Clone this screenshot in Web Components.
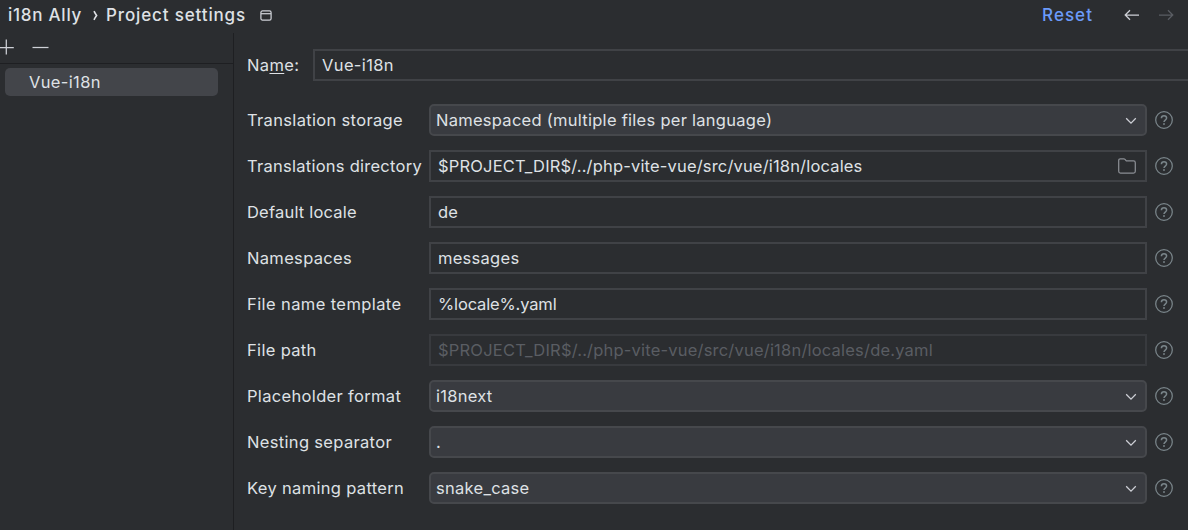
<!DOCTYPE html>
<html lang="en">
<head>
<meta charset="utf-8">
<title>i18n Ally – Project settings</title>
<style>
html,body{margin:0;height:100%;overflow:hidden;background:#2b2d30}
body{font:16.5px/20px Inter,"Noto Sans",sans-serif;letter-spacing:.27px;color:#dfe1e5;white-space:nowrap}
</style>
</head>
<body>
<settings-page></settings-page>
<script>
const define = (name, html, setup) => {
  const template = document.createElement('template');
  template.innerHTML = html;
  customElements.define(name, class extends HTMLElement {
    constructor() {
      super();
      this.attachShadow({ mode: 'open' }).append(template.content.cloneNode(true));
    }
    connectedCallback() { if (setup) setup(this, this.shadowRoot); }
  });
};

const icons = {
  add: [16, 16, '<path d="M8.3 .5v15M.8 8.5h15"/>'],
  remove: [16, 16, '<path d="M.5 8.5h16"/>'],
  back: [16, 12, '<path d="M15 6H1.3M6 1.2 1.2 6 6 10.8"/>'],
  forward: [16, 12, '<path d="M1 6h13.7M10 1.2 14.8 6 10 10.8"/>'],
  crumb: [5, 11, '<path d="M1 1.2C2 3.4 3.2 4.8 3.6 5.5 3.2 6.2 2 7.6 1 9.8" stroke-width="1.6"/>'],
  window: [12, 11, '<rect x=".9" y=".9" width="10.2" height="9.2" rx="1.6"/><path d="M1 3.7h10"/>'],
  chevron: [12, 8, '<path d="m1.2 1.3 4.8 4.9 4.8-4.9" stroke-width="1.25"/>'],
  folder: [18, 16, '<path d="M.7 2.4Q.7.8 2.3.8h3.5q.7 0 1.2.6l1.3 1.5h7.2q1.8 0 1.8 1.8v8.5q0 1.8-1.8 1.8h-13Q.7 15 .7 13.2z"/>'],
  help: [18, 18, '<circle cx="9" cy="9" r="8.3"/><path d="M6.4 7.2c0-1.5 1.1-2.5 2.6-2.5s2.6 1 2.6 2.4c0 2-2.6 2.1-2.6 3.9" stroke-width="1.5"/><circle cx="9" cy="13" r=".95" fill="currentColor" stroke="none"/>']
};

define('ui-icon', `<style>:host{display:block;flex:none;line-height:0}svg{display:block;overflow:visible;fill:none;stroke:currentColor;stroke-width:1.25}</style><svg></svg>`, (host, root) => {
  const [w, h, shape] = icons[host.getAttribute('name')];
  const svg = root.querySelector('svg');
  svg.setAttribute('width', w);
  svg.setAttribute('height', h);
  svg.innerHTML = shape;
});

define('page-header', `<style>
:host{display:flex;align-items:center;height:33px;box-sizing:border-box;padding:0 14px 3px 8px;font-size:17px;font-weight:550}
.a{letter-spacing:.75px;width:85px}.b{letter-spacing:.86px;margin-left:8px;width:153.5px}
.reset{margin-left:auto;color:#6b9bfa;letter-spacing:1.05px;margin-right:31px}
.fwd{color:#5a5d63;margin-left:18px}.back,.win{color:#ced0d6}
</style><span class="a">i18n Ally</span><ui-icon name="crumb"></ui-icon><span class="b">Project settings</span><ui-icon class="win" name="window"></ui-icon>
<span class="reset">Reset</span><ui-icon class="back" name="back"></ui-icon><ui-icon class="fwd" name="forward"></ui-icon>`);

define('side-list', `<style>
:host{display:block;width:233px;border-right:1px solid #1e1f22;box-sizing:content-box}
nav{display:flex;gap:18px;height:30px;align-items:center;padding:0;margin-left:-2px;border-bottom:1px solid #1e1f22;color:#ced0d6}
nav ui-icon{margin-bottom:2px}
.item{margin:4px 15px 0 5px;height:28px;line-height:28px;border-radius:5px;background:#43454a;padding-left:24px;letter-spacing:.35px}
</style><nav><ui-icon name="add"></ui-icon><ui-icon name="remove"></ui-icon></nav><div class="item"><slot></slot></div>`);

define('text-field', `<style>
:host{display:flex;align-items:center;box-sizing:border-box;height:32px;border:2px solid #404246;padding:0 9px 0 7px;flex:1;min-width:0}
:host([disabled]){color:#5a5d63;border-color:#383a3e}
span{flex:1}
</style><span><slot></slot></span><slot name="icon"></slot>`);

define('select-box', `<style>
:host{display:flex;align-items:center;box-sizing:border-box;height:32px;border:2px solid #46484c;border-radius:5px;background:#393b40;padding:0 8px 0 5px;flex:1;min-width:0}
span{flex:1}ui-icon{color:#ced0d6;margin-top:1px}
</style><span><slot></slot></span><ui-icon name="chevron"></ui-icon>`);

define('form-row', `<style>
:host{display:flex;align-items:center;height:32px}
label{width:182px;flex:none;letter-spacing:var(--track,.33px)}
ui-icon{margin:0 15px 0 8px;color:#7a858a}
</style><label></label><slot></slot><ui-icon name="help"></ui-icon>`, (host, root) => {
  root.querySelector('label').textContent = host.getAttribute('label');
});

define('settings-form', `<style>
:host{display:block;flex:1;padding:16px 0 0 13px;min-width:0}
.name{display:flex;align-items:center;letter-spacing:.37px}
.name label{width:66px;flex:none}
.name text-field{margin-right:-4px}
u{text-decoration-thickness:1px;text-underline-offset:2px}
.rows{display:grid;gap:14px;margin-top:23px}
.folder{color:#8b8e94}
</style>
<div class="name"><label>Na<u>m</u>e:</label><text-field>Vue-i18n</text-field></div>
<div class="rows">
<form-row label="Translation storage"><select-box>Namespaced (multiple files per language)</select-box></form-row>
<form-row label="Translations directory" style="--track:.26px"><text-field style="letter-spacing:.17px">$PROJECT_DIR$/../php-vite-vue/src/vue/i18n/locales<ui-icon class="folder" slot="icon" name="folder"></ui-icon></text-field></form-row>
<form-row label="Default locale" style="--track:.2px"><text-field>de</text-field></form-row>
<form-row label="Namespaces"><text-field>messages</text-field></form-row>
<form-row label="File name template" style="--track:.4px"><text-field style="letter-spacing:-.15px">%locale%.yaml</text-field></form-row>
<form-row label="File path"><text-field disabled style="letter-spacing:.2px">$PROJECT_DIR$/../php-vite-vue/src/vue/i18n/locales/de.yaml</text-field></form-row>
<form-row label="Placeholder format"><select-box>i18next</select-box></form-row>
<form-row label="Nesting separator"><select-box>.</select-box></form-row>
<form-row label="Key naming pattern"><select-box>snake_case</select-box></form-row>
</div>`);

define('settings-page', `<style>
:host{display:flex;flex-direction:column;width:1188px;height:530px;overflow:hidden}
main{display:flex;flex:1}
</style><page-header></page-header><main><side-list>Vue-i18n</side-list><settings-form></settings-form></main>`);
</script>
</body>
</html>
